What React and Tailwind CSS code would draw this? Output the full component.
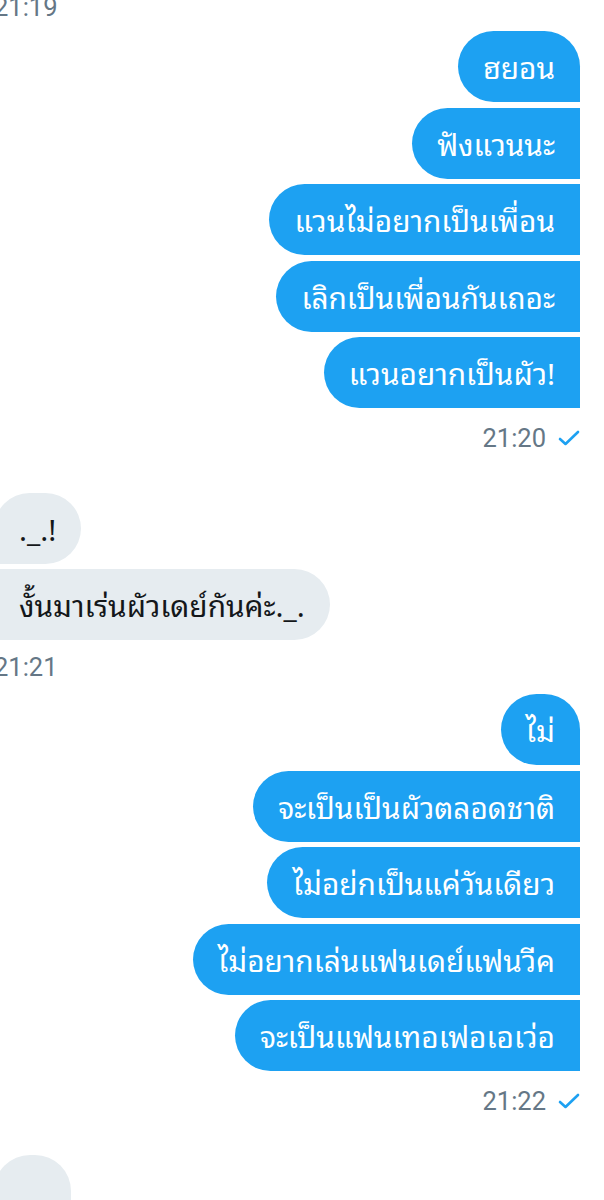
import React from "react";

const FONT = { fontFamily: '"Noto Sans Thai Looped", "Noto Sans Thai UI", Loma, Garuda, "Noto Sans Thai", "Noto Sans", Roboto, sans-serif' };
const TIME_FONT = { fontFamily: 'Roboto, "Noto Sans", sans-serif' };

function Check() {
  return (
    <svg width="22" height="16" viewBox="0 0 22 16" fill="none">
      <path d="M2 9 L7.5 14 L20 2" stroke="#1da1f2" strokeWidth="2.6" strokeLinecap="round" strokeLinejoin="round" />
    </svg>
  );
}

function Sent({ text, first }) {
  return (
    <div
      style={FONT}
      className={`h-[71px] flex items-center px-[25px] bg-[#1da1f2] text-white text-[29.8px] font-normal rounded-l-[36px] whitespace-nowrap ${first ? "rounded-tr-[36px]" : ""}`}
    >
      {text}
    </div>
  );
}

function Recv({ text, first }) {
  return (
    <div
      style={FONT}
      className={`h-[71px] flex items-center px-[25px] bg-[#e6ecf0] text-[#14171a] text-[29.8px] font-normal rounded-r-[36px] whitespace-nowrap ${first ? "rounded-tl-[36px]" : ""}`}
    >
      {text}
    </div>
  );
}

function Time({ t, sent }) {
  return (
    <div style={TIME_FONT} className={`flex items-center gap-[12px] h-[30px] text-[25.5px] leading-[30px] text-[#657786] ${sent ? "self-end" : "self-start"}`}>
      <span>{t}</span>
      {sent && <Check />}
    </div>
  );
}

export default function App() {
  const g1 = ["ฮยอน", "ฟังแวนนะ", "แวนไม่อยากเป็นเพื่อน", "เลิกเป็นเพื่อนกันเถอะ", "แวนอยากเป็นผัว!"];
  const g2 = ["._.!", "งั้นมาเร่นผัวเดย์กันค่ะ._."];
  const g3 = ["ไม่", "จะเป็นเป็นผัวตลอดชาติ", "ไม่อย่กเป็นแค่วันเดียว", "ไม่อยากเล่นแฟนเดย์แฟนวีค", "จะเป็นแฟนเทอเฟอเอเว่อ"];
  return (
    <div className="w-[604px] h-[1200px] overflow-hidden bg-white">
      <div className="ml-[-6px] mr-[24px] mt-[-8px] flex flex-col">
        <Time t="21:19" />
        <div className="mt-[9px] flex flex-col items-end gap-[5.5px]">
          {g1.map((t, i) => <Sent key={i} text={t} first={i === 0} />)}
        </div>
        <div className="mt-[15px] self-end"><Time t="21:20" sent /></div>
        <div className="mt-[40px] flex flex-col items-start gap-[5px]">
          {g2.map((t, i) => <Recv key={i} text={t} first={i === 0} />)}
        </div>
        <div className="mt-[12px]"><Time t="21:21" /></div>
        <div className="mt-[12px] flex flex-col items-end gap-[5.5px]">
          {g3.map((t, i) => <Sent key={i} text={t} first={i === 0} />)}
        </div>
        <div className="mt-[15px] self-end"><Time t="21:22" sent /></div>
        <div className="mt-[39px] flex flex-col items-start">
          <div className="h-[71px] w-[77px] bg-[#e6ecf0] rounded-tr-[36px] rounded-tl-[36px]" />
        </div>
      </div>
    </div>
  );
}
